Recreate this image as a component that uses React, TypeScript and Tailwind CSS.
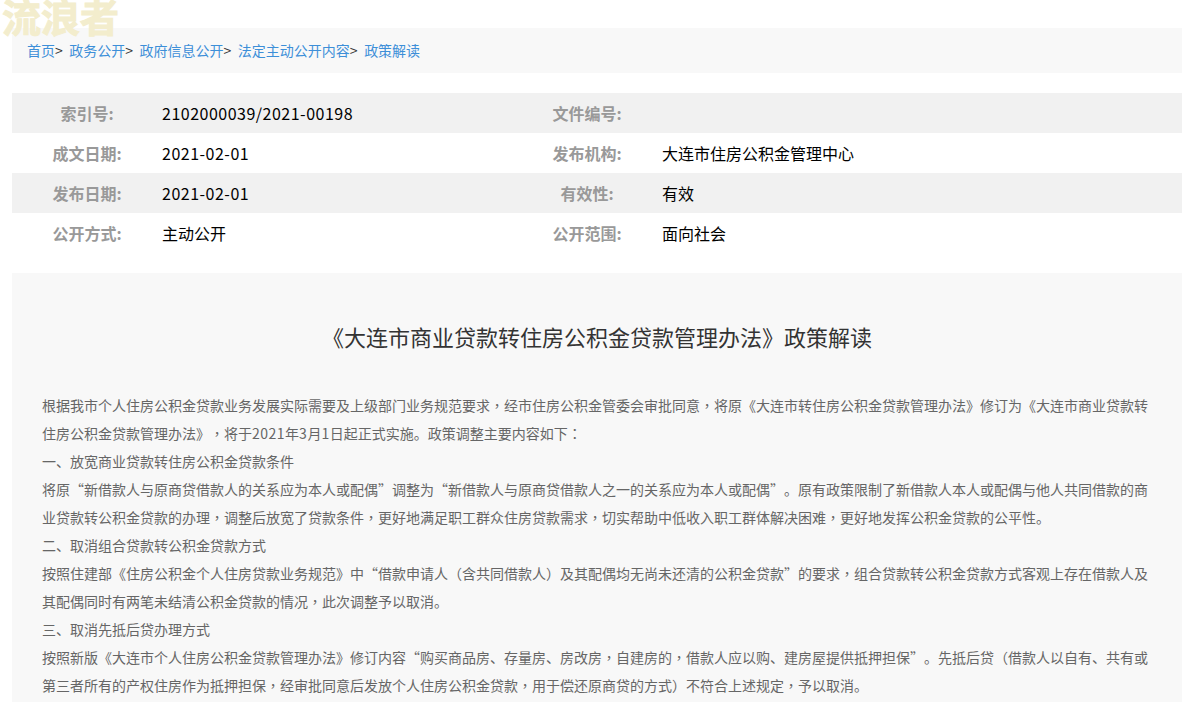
import React from 'react';

const font = "font-['Microsoft_YaHei','Noto_Sans_CJK_SC','Noto_Sans',sans-serif]";

const crumbs = ['首页', '政务公开', '政府信息公开', '法定主动公开内容'];

const rows = [
  ['索引号:', '2102000039/2021-00198', '文件编号:', ''],
  ['成文日期:', '2021-02-01', '发布机构:', '大连市住房公积金管理中心'],
  ['发布日期:', '2021-02-01', '有效性:', '有效'],
  ['公开方式:', '主动公开', '公开范围:', '面向社会'],
];

const paragraphs = [
  '根据我市个人住房公积金贷款业务发展实际需要及上级部门业务规范要求，经市住房公积金管委会审批同意，将原《大连市转住房公积金贷款管理办法》修订为《大连市商业贷款转住房公积金贷款管理办法》，将于2021年3月1日起正式实施。政策调整主要内容如下：',
  '一、放宽商业贷款转住房公积金贷款条件',
  '将原“新借款人与原商贷借款人的关系应为本人或配偶”调整为“新借款人与原商贷借款人之一的关系应为本人或配偶”。原有政策限制了新借款人本人或配偶与他人共同借款的商业贷款转公积金贷款的办理，调整后放宽了贷款条件，更好地满足职工群众住房贷款需求，切实帮助中低收入职工群体解决困难，更好地发挥公积金贷款的公平性。',
  '二、取消组合贷款转公积金贷款方式',
  '按照住建部《住房公积金个人住房贷款业务规范》中“借款申请人（含共同借款人）及其配偶均无尚未还清的公积金贷款”的要求，组合贷款转公积金贷款方式客观上存在借款人及其配偶同时有两笔未结清公积金贷款的情况，此次调整予以取消。',
  '三、取消先抵后贷办理方式',
  '按照新版《大连市个人住房公积金贷款管理办法》修订内容“购买商品房、存量房、房改房，自建房的，借款人应以购、建房屋提供抵押担保”。先抵后贷（借款人以自有、共有或第三者所有的产权住房作为抵押担保，经审批同意后发放个人住房公积金贷款，用于偿还原商贷的方式）不符合上述规定，予以取消。',
];

// the reference has centred commas and wider digits than Noto SC
function Para({ text }: { text: string }) {
  return (
    <p>
      {text.split(/([，：]|\d+)/).map((part, i) => {
        if (part === '，' || part === '：') {
          return (
            <span key={i} className="font-['Noto_Sans_CJK_TC',sans-serif]">
              {part}
            </span>
          );
        }
        if (/^\d+$/.test(part)) {
          return (
            <span key={i} className="tracking-[0.5px]">
              {part}
            </span>
          );
        }
        return part;
      })}
    </p>
  );
}

export default function App() {
  return (
    <div className={`relative h-[702px] w-[1197px] overflow-hidden bg-white [text-spacing-trim:space-all] ${font}`}>
      <div className="absolute left-[2px] top-0 z-10 text-[39px] font-bold leading-[30px] text-[#f3edcd] [-webkit-text-stroke:1px_#f3edcd]">
        流浪者
      </div>

      <div className="ml-3 w-[1170px] pt-7">
        <div className="flex h-[45px] items-center bg-[#f8f8f8] pb-0.5 pl-[15px] text-sm">
          {crumbs.map((c) => (
            <span key={c} className="mr-[6.5px] text-[#333]">
              <a className="text-[#3d8fd8]">{c}</a>&gt;
            </span>
          ))}
          <a className="text-[#3d8fd8]">政策解读</a>
        </div>

        <div className="mt-5">
          {rows.map((r, i) => (
            <div
              key={r[0]}
              className={`grid h-10 grid-cols-[150px_350px_150px_1fr] items-center text-base ${i % 2 === 0 ? 'bg-[#f1f1f1]' : 'bg-white'}`}
            >
              <div className="text-center font-bold text-[#999]">{r[0]}</div>
              <div className={`text-black ${/^\d/.test(r[1]) ? 'tracking-[0.5px]' : ''}`}>{r[1]}</div>
              <div className="text-center font-bold text-[#999]">{r[2]}</div>
              <div className="text-black">{r[3]}</div>
            </div>
          ))}
        </div>

        <div className="mt-5 h-[500px] bg-[#f8f8f8] px-[30px] pt-[45px]">
          <h1 className="text-center text-[22px] font-normal leading-9 text-[#333]">
            《大连市商业贷款转住房公积金贷款管理办法》政策解读
          </h1>
          <div className="mt-[37px] text-sm leading-7 text-[#666]">
            {paragraphs.map((p) => (
              <Para key={p} text={p} />
            ))}
          </div>
        </div>
      </div>
    </div>
  );
}
